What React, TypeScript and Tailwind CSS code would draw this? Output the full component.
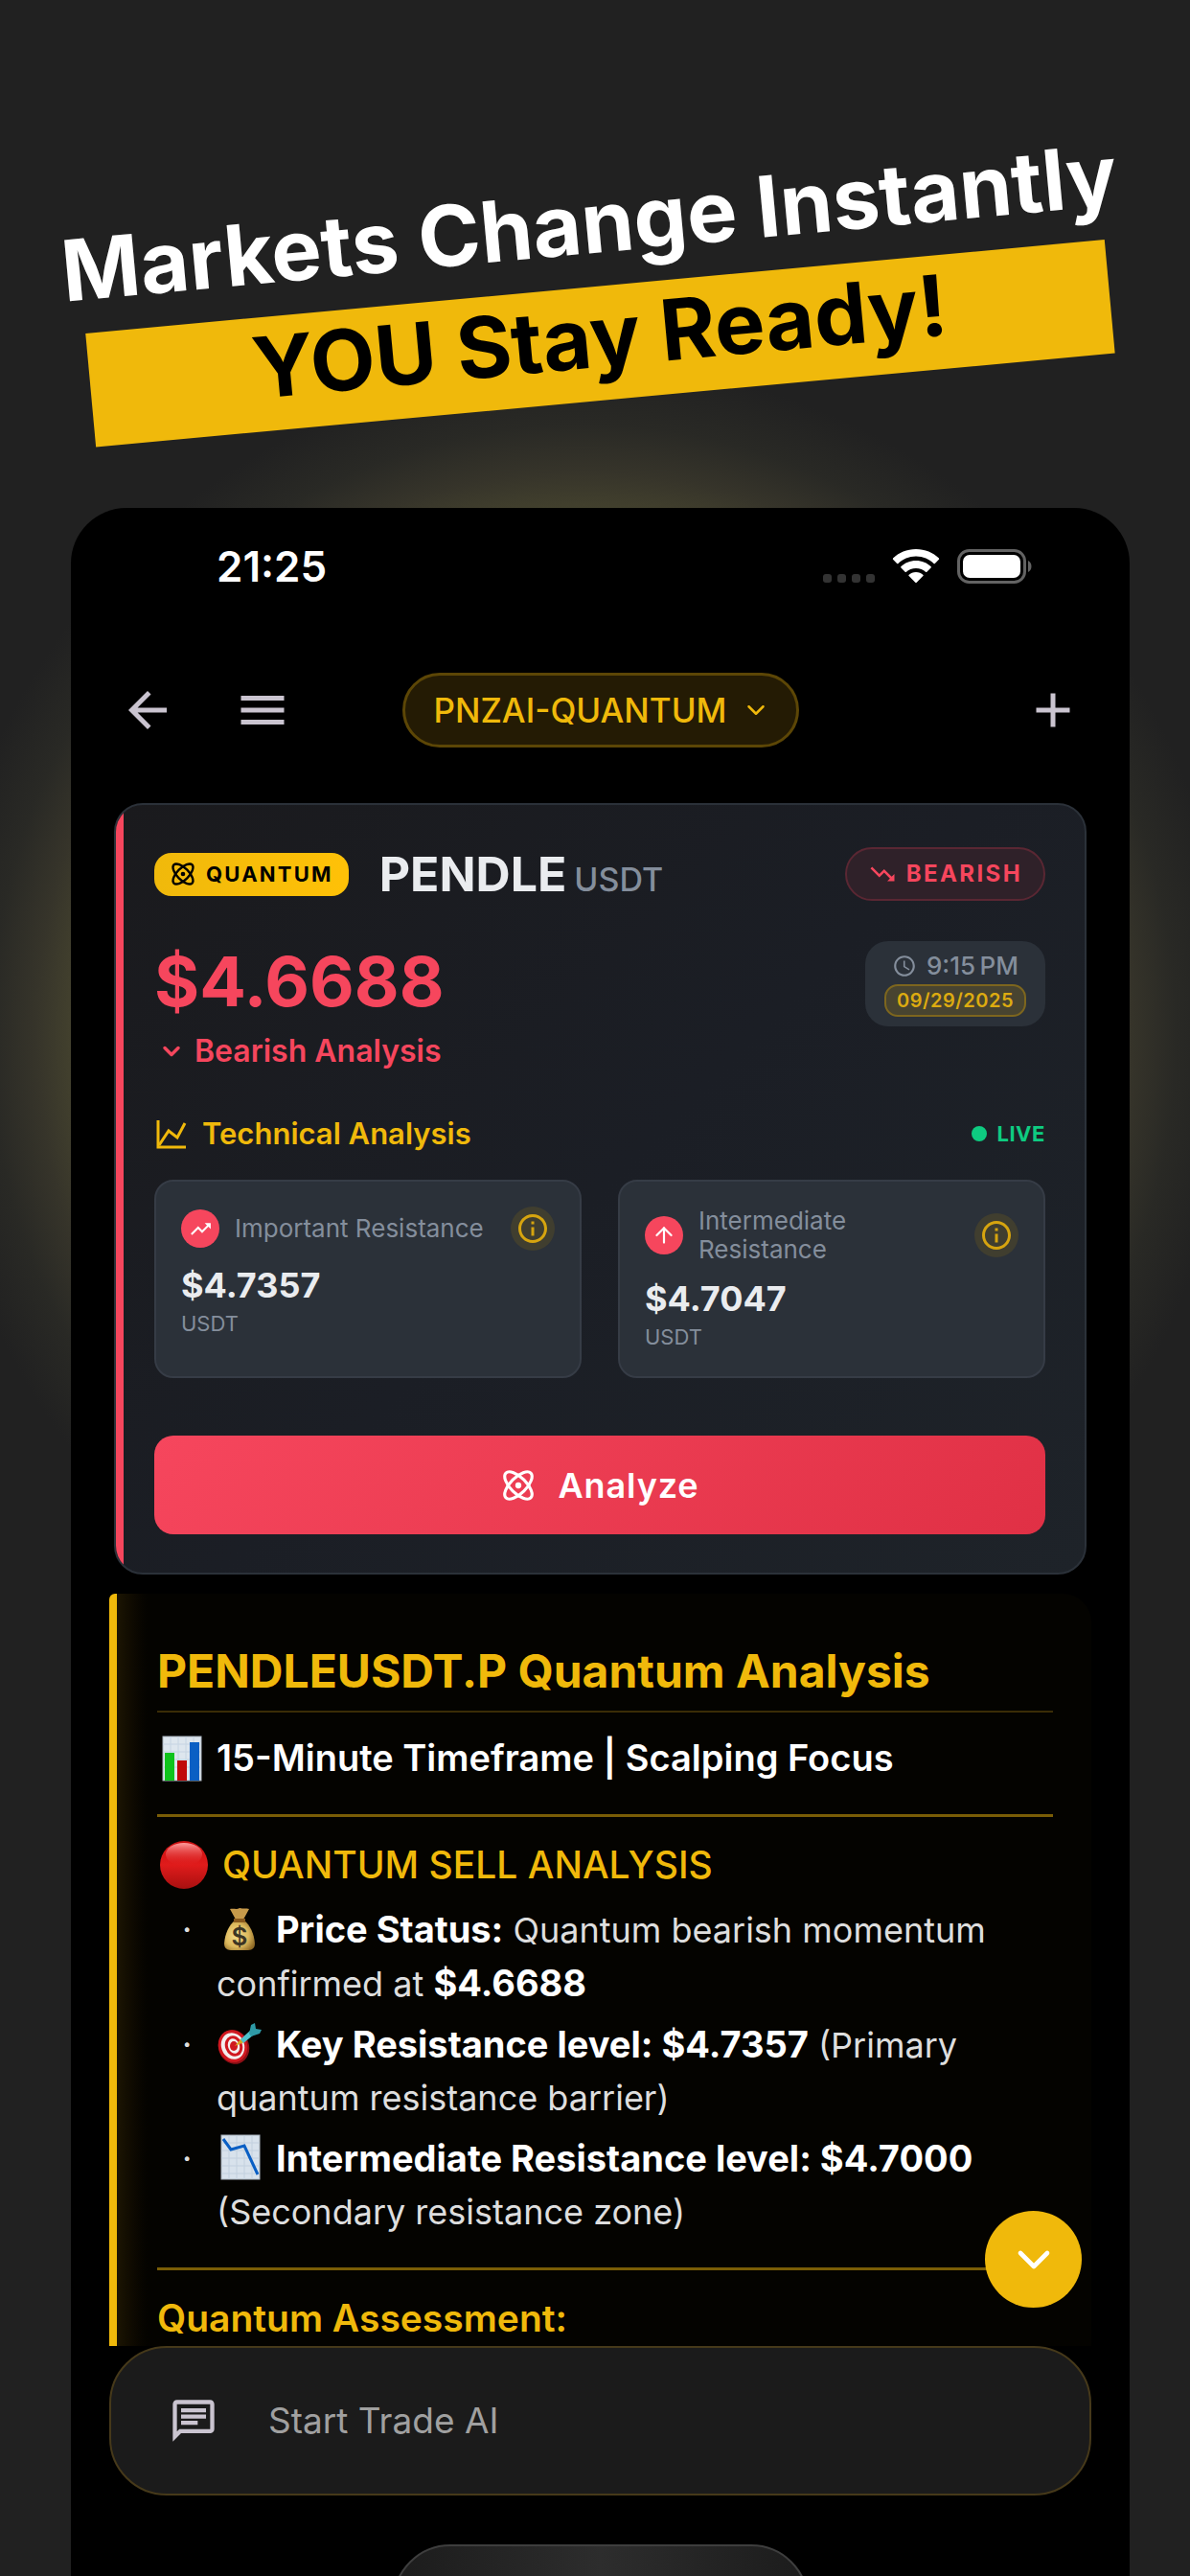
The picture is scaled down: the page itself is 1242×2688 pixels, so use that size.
import { ReactNode } from 'react';
import { ArrowUp, Atom, ChevronDown } from 'lucide-react';
import {
	MdAccessTime,
	MdAdd,
	MdArrowBack,
	MdInfoOutline,
	MdMenu,
	MdOutlineChat,
	MdTrendingDown,
	MdTrendingUp,
} from 'react-icons/md';

const App = () => {
	return (
		<div className="relative flex min-h-screen flex-col overflow-hidden bg-[#212121] font-['Inter',sans-serif]">
			{/* Glow behind the phone */}
			<div className="absolute inset-x-0 top-[380px] h-[1400px] bg-[radial-gradient(ellipse_680px_700px_at_49%_50%,#716c42_0%,#48462f_76%,#36342a_84%,#292925_91%,#212121_100%)]" />

			<Headline />

			<main className="relative mr-[63px] ml-[74px] flex flex-1 flex-col rounded-t-[58px] bg-black">
				<StatusBar />
				<AppBar />
				<SignalCard />
				<Analysis />
				<ChatBox />
				<div className="mt-[51px] flex h-8 flex-1 justify-center overflow-hidden">
					<div className="h-[120px] w-[434px] shrink-0 rounded-full border-2 border-[#3e3e3e] bg-linear-to-r from-[#1c1c1c] via-[#2d2d2d] to-[#1c1c1c]" />
				</div>
			</main>
		</div>
	);
};

const Headline = () => {
	return (
		<h1 className="relative mx-[87px] mt-[180px] mb-[112px] flex -rotate-[5.26deg] flex-col items-center text-center text-[88px] font-bold leading-[104px]">
			<span className="h-[119px] whitespace-nowrap text-white">Markets Change Instantly</span>
			<span className="h-[119px] w-full bg-[#f0b90b] text-black">YOU Stay Ready!</span>
		</h1>
	);
};

const StatusBar = () => {
	return (
		<div className="flex h-[122px] items-center justify-between pr-[102px] pl-[152px]">
			<span className="text-[44px] font-semibold text-white">21:25</span>
			<div className="flex items-center gap-[18px]">
				<div className="flex gap-[6px] pt-6">
					<span className="size-[9px] rounded-[3px] bg-[#333]" />
					<span className="size-[9px] rounded-[3px] bg-[#333]" />
					<span className="size-[9px] rounded-[3px] bg-[#333]" />
					<span className="size-[9px] rounded-[3px] bg-[#333]" />
				</div>
				<svg width="50" height="36" viewBox="0 0 50 36" fill="#fff">
					<path d="M25 0C15.500 0 7 3.700 1 9.600l-.2.900 4.600 4.700h.8C11 10.500 17.700 7.600 25 7.600s14 2.900 18.800 7.600h.8l4.600-4.700-.2-.9C43 3.700 34.500 0 25 0z" />
					<path d="M25 12c-6.100 0-11.700 2.400-15.800 6.300v.9l4.700 4.700h.8c2.700-2.500 6.300-4 10.300-4s7.600 1.500 10.300 4h.8l4.700-4.700v-.9C36.700 14.400 31.100 12 25 12z" />
					<path d="M25 24c-3 0-5.600 1.100-7.600 2.900v.9l7.100 7.300h1l7.100-7.300v-.9C30.600 25.100 28 24 25 24z" />
				</svg>
				<svg width="78" height="36" viewBox="0 0 78 36">
					<rect x="1.500" y="1.500" width="69" height="33" rx="11" fill="none" stroke="#636363" strokeWidth="3" />
					<rect x="6" y="6" width="60" height="24" rx="7" fill="#fff" />
					<path d="M74 12c2 1 3.500 3 3.500 6S76 23 74 24z" fill="#636363" />
				</svg>
			</div>
		</div>
	);
};

const AppBar = () => {
	return (
		<nav className="mt-[50px] mb-[58px] flex items-center justify-between px-[50px] text-[#cac4d0]">
			<div className="flex w-[240px] gap-[60px]">
				<button type="button" aria-label="Back">
					<MdArrowBack size={60} />
				</button>
				<button type="button" aria-label="Menu">
					<MdMenu size={60} />
				</button>
			</div>
			<label className="relative flex items-center text-[#f0b90b]">
				<select
					aria-label="Model"
					className="h-[78px] appearance-none rounded-full border-3 border-[#5c4606] bg-[#241b04] pr-[72px] pl-[30px] text-[35px] font-medium"
				>
					<option>PNZAI-QUANTUM</option>
				</select>
				<ChevronDown size={30} strokeWidth={2} className="pointer-events-none absolute right-[30px]" />
			</label>
			<div className="flex w-[240px] justify-end">
				<button type="button" aria-label="New chat">
					<MdAdd size={60} />
				</button>
			</div>
		</nav>
	);
};

const SignalCard = () => {
	return (
		<section className="mx-[45px] overflow-hidden rounded-[30px] border-2 border-[#2b3139] bg-linear-135 from-[#1a1a1d] via-[#1b1e25] to-[#1e2329]">
			<div className="border-l-8 border-[#f6465d] pt-[44px] pr-[41px] pb-10 pl-[32px]">
				<div className="flex h-[56px] items-center justify-between">
					<div className="flex items-center">
						<span className="flex h-[45px] items-center gap-[10px] rounded-[18px] bg-linear-to-r from-[#f0b90b] to-[#ffc107] px-4 text-[22px] font-bold tracking-widest text-black">
							<Atom size={28} />
							QUANTUM
						</span>
						<h2 className="ml-8 flex items-baseline gap-2 text-[50px] leading-[56px] font-bold text-[#eaecef]">
							PENDLE
							<span className="text-[34px] leading-10 font-medium text-[#848e9c]">USDT</span>
						</h2>
					</div>
					<span className="flex h-[56px] items-center gap-[10px] rounded-full border-2 border-[#5a2733] bg-[#2f2129] px-[22px] text-[24px] font-bold tracking-widest text-[#f6465d]">
						<MdTrendingDown size={30} />
						BEARISH
					</span>
				</div>

				<div className="mt-[42px] flex items-start justify-between">
					<div className="text-[#f6465d]">
						<p className="text-[72px] leading-[84px] font-bold">$4.6688</p>
						<p className="mt-[11px] flex items-center gap-[10px] pl-1 text-[32px] leading-10 font-semibold">
							<ChevronDown size={28} strokeWidth={3} />
							Bearish Analysis
						</p>
					</div>
					<div className="flex h-[89px] w-[188px] flex-col items-center rounded-3xl bg-[#2b3139] pt-[10px]">
						<time className="flex items-center gap-[10px] text-[26px] leading-[32px] font-medium text-[#848e9c]">
							<MdAccessTime size={26} />
							{'9:15\u202fPM'}
						</time>
						<time className="mt-[3px] h-[34px] rounded-[14px] border-2 border-[#7d661e] bg-[#484430] px-[11px] text-[20px] leading-[30px] font-semibold tracking-wide text-[#ddab10]">
							09/29/2025
						</time>
					</div>
				</div>

				<div className="mt-[46px] flex items-center justify-between">
					<h3 className="flex items-center gap-4 text-[31px] leading-10 font-semibold text-[#f0b90b]">
						<svg width="34" height="32" viewBox="0 0 34 32" fill="none" stroke="currentColor" strokeWidth="3">
							<path d="M4 2v28h29" />
							<path d="M5 28l10-15 9 7 8-15" />
						</svg>
						Technical Analysis
					</h3>
					<span className="flex items-center gap-[10px] text-[22px] font-bold tracking-wide text-[#0ecb81]">
						<span className="size-4 rounded-full bg-current" />
						LIVE
					</span>
				</div>

				<div className="mt-[28px] grid grid-cols-2 gap-[38px]">
					<Level label="Important Resistance" price="$4.7357" icon={<MdTrendingUp size={25} />} />
					<Level label="Intermediate Resistance" price="$4.7047" icon={<ArrowUp size={26} />} />
				</div>

				<button
					type="button"
					className="mt-[60px] flex h-[103px] w-full items-center justify-center gap-[22px] rounded-[20px] bg-linear-135 from-[#f6465d] to-[#e03045] text-[36px] font-semibold tracking-wide text-white"
				>
					<Atom size={38} />
					Analyze
				</button>
			</div>
		</section>
	);
};

const Level = ({ label, price, icon }: { label: string; price: string; icon: ReactNode }) => {
	return (
		<div className="h-[207px] rounded-[20px] border-2 border-[#363c46] bg-[#2b3139] p-[26px] text-[#848e9c]">
			<div className="flex items-center">
				<span className="flex size-10 shrink-0 items-center justify-center rounded-full bg-[#f6465d] text-white">
					{icon}
				</span>
				<h4 className="mx-4 flex-1 text-[26px] leading-[30px]">{label}</h4>
				<button
					type="button"
					aria-label={`About ${label}`}
					className="flex size-[46px] shrink-0 items-center justify-center rounded-full bg-[#403e2f] text-[#d6a40f]"
				>
					<MdInfoOutline size={36} />
				</button>
			</div>
			<p className="mt-[14px] text-[36px] leading-[44px] font-bold text-[#eaecef]">{price}</p>
			<p className="mt-[4px] text-[22px] leading-[28px]">USDT</p>
		</div>
	);
};

const Analysis = () => {
	return (
		<article className="relative mx-[40px] mt-5 h-[785px] overflow-hidden rounded-t-[30px] rounded-tl-md border-l-8 border-[#f0b90b] bg-linear-to-r from-[#1c1503] to-[#040300] to-[32px] pr-[40px] pl-[42px] text-[36px] leading-[55px] text-[#dedede]">
			<h2 className="mt-[50px] border-b-2 border-[#3a2c06] pb-[10px] text-[48px] leading-[62px] font-bold text-[#f0b90b]">
				PENDLEUSDT.P Quantum Analysis
			</h2>
			<p className="mt-5 flex items-center gap-[14px] text-[38px] font-semibold text-white">
				<BarsEmoji />
				15-Minute Timeframe | Scalping Focus
			</p>
			<hr className="mt-[31px] border-t-3 border-[#7a5d06]" />
			<h3 className="mt-[22px] flex items-center gap-[14px] text-[39px] font-medium text-[#f0b90b]">
				<RedCircleEmoji />
				QUANTUM SELL ANALYSIS
			</h3>
			<ul className="mt-[13px] flex flex-col gap-[8px]">
				<Item emoji={<MoneyBagEmoji />}>
					<b>Price Status:</b> Quantum bearish momentum confirmed at <b>$4.6688</b>
				</Item>
				<Item emoji={<DartEmoji />}>
					<b>Key Resistance level: $4.7357</b> (Primary quantum resistance barrier)
				</Item>
				<Item emoji={<DownChartEmoji />}>
					<b>Intermediate Resistance level: $4.7000</b> (Secondary resistance zone)
				</Item>
			</ul>
			<hr className="mt-[30px] border-t-3 border-[#7a5d06]" />
			<h3 className="mt-[22px] text-[39px] font-semibold text-[#f0b90b]">Quantum Assessment:</h3>
			<button
				type="button"
				aria-label="Scroll to bottom"
				className="absolute right-[10px] bottom-[40px] flex size-[101px] items-center justify-center rounded-full bg-[#f0b90b] text-white"
			>
				<ChevronDown size={56} strokeWidth={2} />
			</button>
		</article>
	);
};

const Item = ({ emoji, children }: { emoji: ReactNode; children: ReactNode }) => {
	return (
		<li className="flex text-[#dedede] [&_b]:text-[38px] [&_b]:text-white">
			<span className="w-[62px] shrink-0 pl-[26px]">·</span>
			<p>
				<span className="mr-[14px] inline-block align-text-bottom">{emoji}</span>
				{children}
			</p>
		</li>
	);
};

const ChatBox = () => {
	return (
		<label className="mx-[40px] flex h-[156px] items-center gap-[52px] rounded-[60px] border-2 border-[#46391a] bg-[#1b1b1b] pr-10 pl-[60px]">
			<MdOutlineChat size={52} className="shrink-0 text-[#cac4d0]" />
			<input
				type="text"
				aria-label="Message"
				placeholder="Start Trade AI"
				className="min-w-0 flex-1 bg-transparent text-[37px] text-white outline-none placeholder:text-[#a0a0a0]"
			/>
		</label>
	);
};

const BarsEmoji = () => (
	<svg width="48" height="48" viewBox="0 0 48 48" className="shrink-0">
		<rect x="6" y="1" width="40" height="46" fill="#dde6ee" stroke="#aab4be" />
		<path d="M6 9h40M6 17h40M6 25h40M6 33h40M14 1v46M22 1v46M30 1v46M38 1v46" stroke="#c6d4e2" />
		<path d="M8 18h10v29H8z" fill="#0fc31c" />
		<path d="M21 26h10v21H21z" fill="#c00808" />
		<path d="M34 7h10v40H34z" fill="#0a5fc4" />
	</svg>
);

const RedCircleEmoji = () => (
	<svg width="54" height="52" viewBox="0 0 54 52" className="shrink-0">
		<defs>
			<linearGradient id="red" x1="0" y1="0" x2="0" y2="1">
				<stop offset="0" stopColor="#c80f0f" />
				<stop offset=".5" stopColor="#e01b1b" />
				<stop offset="1" stopColor="#a81010" />
			</linearGradient>
			<linearGradient id="shine" x1="0" y1="0" x2="0" y2="1">
				<stop offset="0" stopColor="#ff9c9c" />
				<stop offset="1" stopColor="#e02020" stopOpacity="0" />
			</linearGradient>
		</defs>
		<circle cx="28" cy="26" r="25" fill="url(#red)" />
		<ellipse cx="28" cy="15" rx="19" ry="12" fill="url(#shine)" />
	</svg>
);

const MoneyBagEmoji = () => (
	<svg width="48" height="46" viewBox="0 0 48 46">
		<defs>
			<radialGradient id="bag" cx=".4" cy=".5" r=".65">
				<stop offset="0" stopColor="#f6dc8a" />
				<stop offset=".6" stopColor="#dcb85c" />
				<stop offset="1" stopColor="#8f6a26" />
			</radialGradient>
		</defs>
		<path d="M14 2c4-1 7 1 10-1 4 1 7 0 10 1-2 4-4 7-6 11h-8c-2-4-4-7-6-11z" fill="#c79a4a" />
		<path d="M19 14h10c6 5 10 13 11 24 0 5-3 7-7 7H15c-4 0-7-2-7-7 1-11 5-19 11-24z" fill="url(#bag)" />
		<path d="M18 12h12v4H18z" fill="#8a5a1e" />
		<text x="24" y="40" textAnchor="middle" fontSize="26" fontWeight="600" fill="#3c3524">
			$
		</text>
	</svg>
);

const DartEmoji = () => (
	<svg width="48" height="46" viewBox="0 0 48 46">
		<ellipse cx="18" cy="26" rx="16" ry="18" fill="#8e1016" transform="rotate(-20 18 26)" />
		<ellipse cx="17" cy="25" rx="15" ry="17" fill="#d01820" transform="rotate(-20 17 25)" />
		<ellipse cx="17" cy="25" rx="12" ry="14" fill="#f4eeee" transform="rotate(-20 17 25)" />
		<ellipse cx="18" cy="25" rx="9" ry="11" fill="#d01820" transform="rotate(-20 18 25)" />
		<ellipse cx="18" cy="25" rx="6" ry="8" fill="#f4eeee" transform="rotate(-20 18 25)" />
		<ellipse cx="18" cy="25" rx="4" ry="5" fill="#d01820" />
		<path d="M19 25l7-8 3 4z" fill="#d9a520" />
		<path d="M25 18l10-9 4 4-11 9z" fill="#4fc3cd" />
		<path d="M34 12l2-9 4-2 1 6 6 1-2 4-9 3z" fill="#2e9aa6" />
	</svg>
);

const DownChartEmoji = () => (
	<svg width="48" height="48" viewBox="0 0 48 48">
		<rect x="5" y="1" width="40" height="46" fill="#d8e2ec" stroke="#aab4be" />
		<path d="M5 9h40M5 17h40M5 25h40M5 33h40M5 41h40M13 1v46M21 1v46M29 1v46M37 1v46" stroke="#c2d0de" />
		<path d="M7 5l8 11 14-4 14 30" fill="none" stroke="#0a5fc4" strokeWidth="3" />
	</svg>
);

export default App;
